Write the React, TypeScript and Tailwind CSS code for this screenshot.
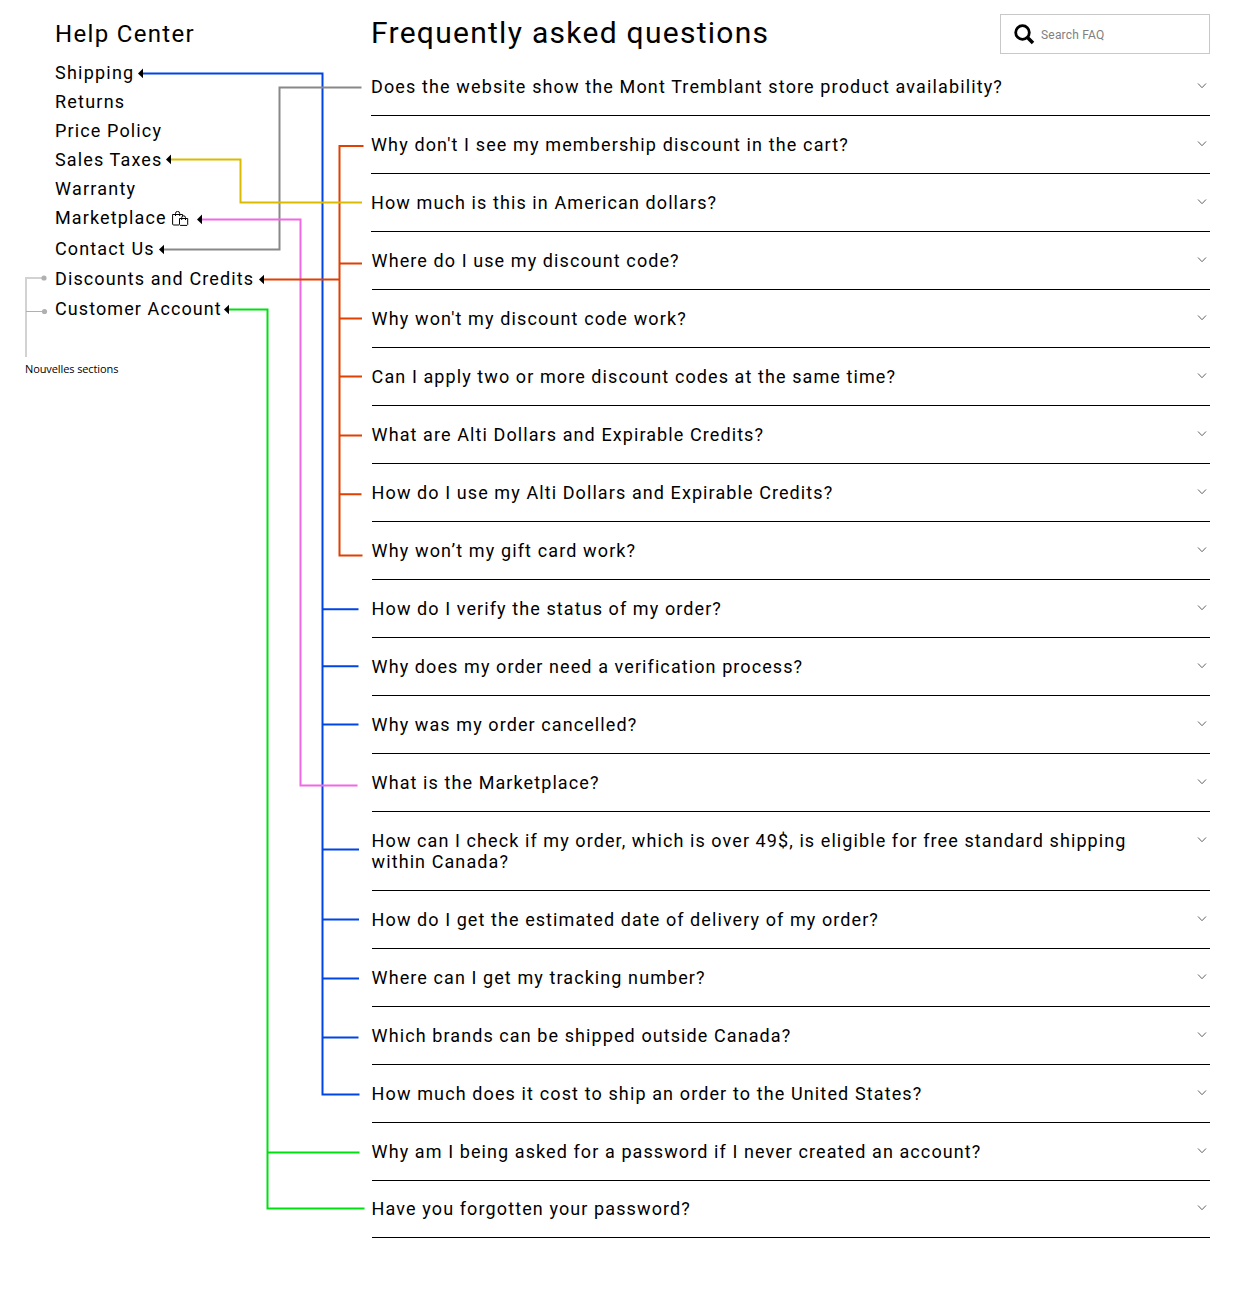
import React from "react";

type Faq = { q: string; h: string };

const row = "h-[58px] pt-[18px] ml-px tracking-[1.09px] [&>p]:-ml-[0.4px]";
const wideRow = "h-[58px] pt-[18px] tracking-[1.13px]";

const faqs: Faq[] = [
  { q: "Does the website show the Mont Tremblant store product availability?", h: wideRow },
  { q: "Why don't I see my membership discount in the cart?", h: wideRow },
  { q: "How much is this in American dollars?", h: "h-[58px] pt-[18px] tracking-[1.1px]" },
  { q: "Where do I use my discount code?", h: row },
  { q: "Why won't my discount code work?", h: "h-[58px] pt-[18px] ml-px tracking-[1.13px] [&>p]:-ml-[0.4px]" },
  { q: "Can I apply two or more discount codes at the same time?", h: row },
  { q: "What are Alti Dollars and Expirable Credits?", h: row },
  { q: "How do I use my Alti Dollars and Expirable Credits?", h: row },
  { q: "Why won’t my gift card work?", h: "h-[58px] pt-[18px] ml-px tracking-[1.13px] [&>p]:-ml-[0.4px]" },
  { q: "How do I verify the status of my order?", h: row },
  { q: "Why does my order need a verification process?", h: row },
  { q: "Why was my order cancelled?", h: row },
  { q: "What is the Marketplace?", h: row },
  {
    q: "How can I check if my order, which is over 49$, is eligible for free standard shipping within Canada?",
    h: "h-[79px] pt-[18px] ml-px tracking-[1.085px] [&>p]:-ml-[0.4px]",
  },
  { q: "How do I get the estimated date of delivery of my order?", h: "h-[58px] pt-[18px] ml-px tracking-[1.08px] [&>p]:-ml-[0.4px]" },
  { q: "Where can I get my tracking number?", h: row },
  { q: "Which brands can be shipped outside Canada?", h: row },
  { q: "How much does it cost to ship an order to the United States?", h: "h-[58px] pt-[18px] ml-px tracking-[1.12px] [&>p]:-ml-[0.4px]" },
  { q: "Why am I being asked for a password if I never created an account?", h: row },
  { q: "Have you forgotten your password?", h: "h-[57px] pt-[17px] ml-px tracking-[1.11px] [&>p]:-ml-[0.4px]" },
];

const links = [
  { label: "Shipping", h: "h-[29px] tracking-[1.23px]" },
  { label: "Returns", h: "h-[29px] tracking-[1.23px]" },
  { label: "Price Policy", h: "h-[29px]" },
  { label: "Sales Taxes", h: "h-[29px]" },
  { label: "Warranty", h: "h-[29px] tracking-[1.23px]" },
  { label: "Marketplace", h: "h-[31px]", bags: true },
  { label: "Contact Us", h: "h-[30px]" },
  { label: "Discounts and Credits", h: "h-[30px] tracking-[1.1px]" },
  { label: "Customer Account", h: "h-[30px] tracking-[1.09px]" },
];

function Bags() {
  return (
    <svg width="17" height="16" viewBox="0 0 17 16" fill="none" stroke="#000" strokeWidth="1" className="ml-[5px] mt-[4px]">
      <path d="M7 14H1.2L0.6 13.2V3.5H10.6V5.5" />
      <path d="M3.5 5V2.5A2 2 0 0 1 7.7 2.5V5" />
      <path d="M7.5 7.5H15.7V13.6L15 14.4H8.2L7.5 13.6Z" />
      <path d="M9.7 9V6.7A1.8 1.8 0 0 1 13.5 6.7V9" />
    </svg>
  );
}

function Connectors() {
  return (
    <svg
      className="pointer-events-none absolute left-0 top-0"
      width="1241"
      height="1311"
      viewBox="0 0 1241 1311"
      fill="none"
      strokeWidth="2"
    >
      <g stroke="#d2d2d2">
        <path d="M26 357V278H43" />
        <path d="M26 311.5H44" stroke="#b0b0b0" strokeWidth="1" />
      </g>
      <circle cx="44" cy="278" r="2.6" fill="#b0b0b0" />
      <circle cx="44.5" cy="311.5" r="2.6" fill="#b0b0b0" />
      <path stroke="#0044e6" d="M143 73.4H322.5V1094.4H359.5M322.5 609.3H358.5M322.5 666.3H358.5M322.5 724.4H358.5M322.5 849.4H359M322.5 919.4H359M322.5 978.4H359M322.5 1037.4H358.5" />
      <path stroke="#888888" d="M164 249.5H279.5V87.4H361.5" />
      <path stroke="#f069e4" d="M202 219.4H300.5V785.4H357.5" />
      <path stroke="#e04000" d="M264 279.4H339.5M363.5 146H339.5V555.4H362.5M339.5 263.4H362M339.5 318.4H362M339.5 376.4H362M339.5 435.4H362M339.5 494.3H361.5" />
      <path stroke="#dabb00" d="M171 159.4H240.5V202.5H362" />
      <path stroke="#00e010" d="M229 309.4H267.5V1208.4H364.5M267.5 1152.4H359.5" />
      <g fill="#000">
        <path d="M138 73.4L143 68.6V78.2Z" />
        <path d="M166 159.4L171 154.6V164.2Z" />
        <path d="M197 219.4L202 214.6V224.2Z" />
        <path d="M159 249.5L164 244.7V254.3Z" />
        <path d="M259 279.5L264 274.7V284.3Z" />
        <path d="M224 309.5L229 304.7V314.3Z" />
      </g>
    </svg>
  );
}

export default function App() {
  return (
    <div className="relative flex h-[1311px] w-[1241px] overflow-hidden bg-white font-['Roboto',sans-serif] text-black">
      <aside className="w-[371px] shrink-0 pl-[55px] pt-[19px]">
        <h2 className="h-[43px] text-[24px] leading-[31px] tracking-[1.33px]">Help Center</h2>
        <nav className="flex flex-col text-[18px] leading-[21px] tracking-[1.13px]">
          {links.map((l) => (
            <a key={l.label} className={`flex whitespace-nowrap ${l.h}`}>
              {l.label}
              {l.bags && <Bags />}
            </a>
          ))}
        </nav>
        <p className="mt-[33px] -ml-[30px] font-['Open_Sans',sans-serif] text-[11px] leading-[15px] tracking-[-0.1px]">
          Nouvelles sections
        </p>
      </aside>

      <main className="w-[839px] pt-[14px]">
        <header className="flex h-[44px] justify-between">
          <h1 className="text-[30px] leading-[37px] tracking-[1.28px]">Frequently asked questions</h1>
          <label className="flex h-[40px] w-[210px] items-center border border-[#c8c8c8] pl-[13px]">
            <svg width="21" height="21" viewBox="0 0 21 21" fill="none" stroke="#000">
              <circle cx="8.5" cy="8.5" r="6.8" strokeWidth="2.8" />
              <path d="M13.5 13.5L19 19" strokeWidth="3.6" />
            </svg>
            <span className="ml-[6px] pt-[2px] text-[12px] tracking-[0.2px] text-[#808080]">Search FAQ</span>
          </label>
        </header>
        <ul>
          {faqs.map((f) => (
            <li key={f.q} className={`flex justify-between border-b border-black ${f.h}`}>
              <p className="w-[780px] text-[18px] leading-[21px]">{f.q}</p>
              <svg className="mr-[3px] mt-[6px]" width="10" height="8" viewBox="0 0 10 8" fill="none" stroke="#606060">
                <path d="M1 1.5L5 5.7L9 1.5" />
              </svg>
            </li>
          ))}
        </ul>
      </main>
      <Connectors />
    </div>
  );
}
